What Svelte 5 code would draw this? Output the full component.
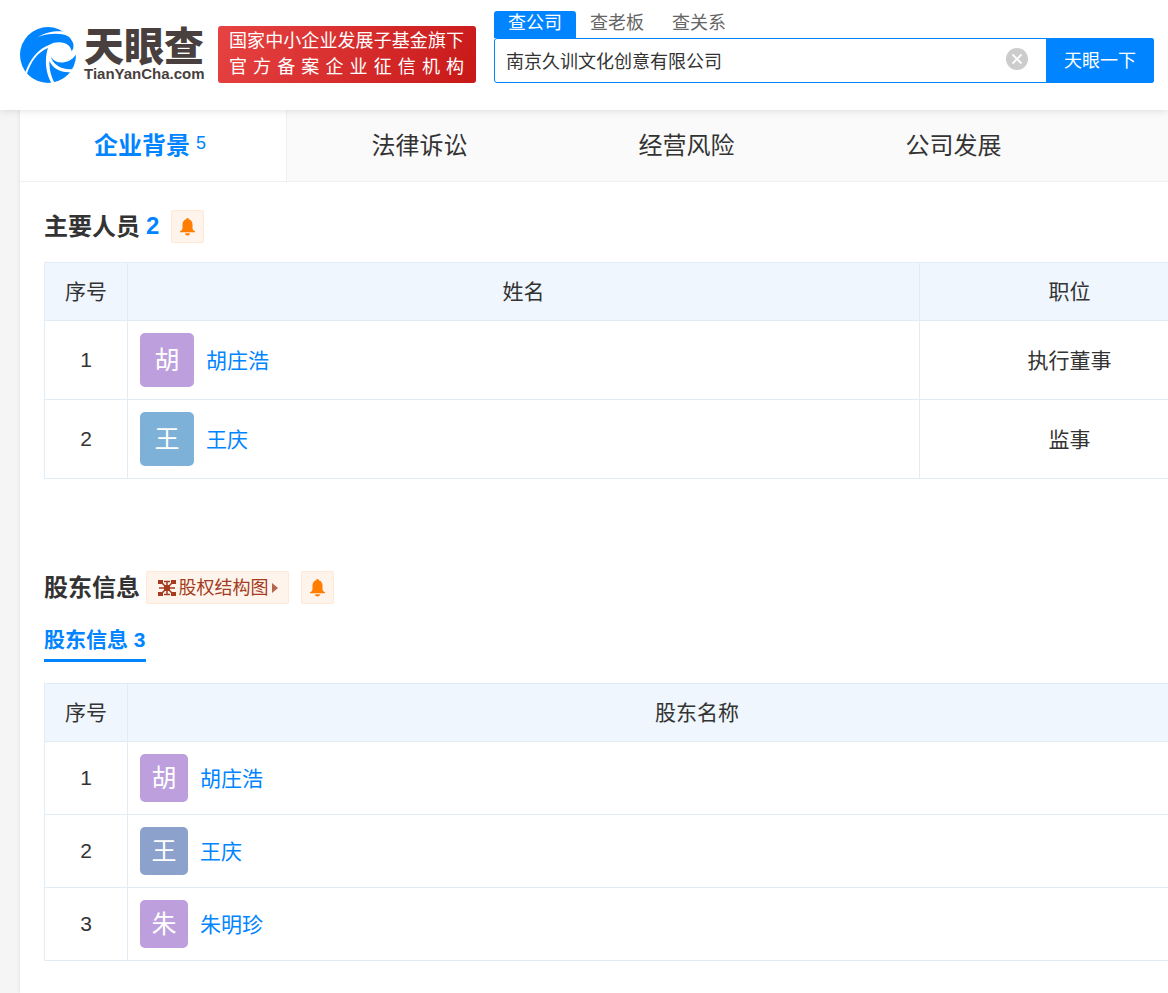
<script>
  let keyword = $state("南京久训文化创意有限公司");
  let searchType = $state("查公司");
  let activeTab = $state("企业背景");

  const searchTypes = ["查公司", "查老板", "查关系"];
  const tabs = [
    { name: "企业背景", count: 5 },
    { name: "法律诉讼" },
    { name: "经营风险" },
    { name: "公司发展" },
  ];
  const staff = [
    { name: "胡庄浩", color: "purple", position: "执行董事" },
    { name: "王庆", color: "blue", position: "监事" },
  ];
  const holders = [
    { name: "胡庄浩", color: "purple" },
    { name: "王庆", color: "indigo" },
    { name: "朱明珍", color: "purple" },
  ];
</script>

{#snippet bell()}
  <button class="bell" aria-label="监控">
    <svg width="17" height="18" viewBox="0 0 17 18" fill="#ff7d00">
      <path d="M8.500 0a1.300 1.300 0 0 1 1.300 1.300C12.300 2 13.500 4 13.500 6.500V10.500Q13.700 12.500 16 13.300V14.200H1V13.300Q3.300 12.500 3.500 10.500V6.500C3.500 4 4.700 2 7.200 1.300A1.300 1.300 0 0 1 8.500 0Z" />
      <path d="M6 15.200h5a2.500 2.200 0 0 1-5 0Z" />
    </svg>
  </button>
{/snippet}

{#snippet person(p)}
  <div class="person">
    <span class="avatar {p.color}">{p.name[0]}</span>
    <a href="#{p.name}">{p.name}</a>
  </div>
{/snippet}

<header>
  <a class="logo" href="#home">
    <svg width="56" height="56" viewBox="0 0 56 56">
      <circle cx="28" cy="28" r="28" fill="#0084ff" />
      <g fill="#fff">
        <path d="M18 10C25 5.500 35 3.500 44 4.500L47 6L56 14V21L53.500 20C54 14 51.500 11 48 9.200C40 5.500 28 6.500 18 10Z" />
        <path d="M5 46C10 32 18 22 29 18C36 14 44 15 48 18C50 19.500 51 21.500 51.500 24C53 22.500 53.600 21 53.500 19L58 20V24.500C54 32 48 35.500 41 35.500C36 35.500 32 32 30.500 29C33 38 42 43.500 54 42L52.500 45C42 46.500 33 42 29.500 34C29 42 31 49 34.500 56H31.500C26 47 24 33 28 21C18 25 11 34 6.500 48Z" />
      </g>
    </svg>
    <span class="wordmark">
      <strong>天眼查</strong>
      <span>TianYanCha.com</span>
    </span>
  </a>
  <div class="banner">
    <span>国家中小企业发展子基金旗下</span>
    <span>官方备案企业征信机构</span>
  </div>
  <form class="search" onsubmit={(e) => e.preventDefault()}>
    <div class="types">
      {#each searchTypes as type}
        <button type="button" class:active={searchType === type} onclick={() => (searchType = type)}>{type}</button>
      {/each}
    </div>
    <div class="box">
      <input type="text" aria-label="公司名称" bind:value={keyword} />
      <button type="button" class="clear" aria-label="清空" onclick={() => (keyword = "")}>
        <svg width="22" height="22" viewBox="0 0 22 22">
          <circle cx="11" cy="11" r="11" fill="#ccc" />
          <path d="M6.500 6.500l9 9M15.500 6.500l-9 9" stroke="#fff" stroke-width="1.800" />
        </svg>
      </button>
      <button class="submit">天眼一下</button>
    </div>
  </form>
</header>

<main>
  <nav>
    {#each tabs as tab}
      <button class:active={activeTab === tab.name} onclick={() => (activeTab = tab.name)}>
        {tab.name}{#if tab.count}<small>{tab.count}</small>{/if}
      </button>
    {/each}
  </nav>

  <section class="staff">
    <div class="title">
      <h2>主要人员</h2>
      <span class="count">2</span>
      {@render bell()}
    </div>
    <table>
      <thead>
        <tr><th class="index">序号</th><th>姓名</th><th class="position">职位</th></tr>
      </thead>
      <tbody>
        {#each staff as p, i}
          <tr>
            <td>{i + 1}</td>
            <td>{@render person(p)}</td>
            <td class="text">{p.position}</td>
          </tr>
        {/each}
      </tbody>
    </table>
  </section>

  <section class="holders">
    <div class="title">
      <h2>股东信息</h2>
      <button class="chart">
        <svg width="18" height="16" viewBox="0 0 18 16" fill="#a33c22">
          <path d="M0 0h5v4H0zM13 0h5v4h-5zM0 12h5v4H0zM13 12h5v4h-5zM6 5h6v6H6z" />
          <path d="M3 2l5 5M15 2l-5 5M3 14l5-5M15 14l-5-5M9 1v14M1 8h16M6 1.500h6M6 14.500h6" stroke="#a33c22" stroke-width="1.500" />
        </svg>
        <span>股权结构图</span>
        <svg width="6" height="10" viewBox="0 0 6 10" fill="#b5654f"><path d="M0 0l6 5-6 5z" /></svg>
      </button>
      {@render bell()}
    </div>
    <a class="subtab" href="#holders">股东信息 3</a>
    <table>
      <thead>
        <tr><th class="index">序号</th><th>股东名称</th></tr>
      </thead>
      <tbody>
        {#each holders as p, i}
          <tr>
            <td>{i + 1}</td>
            <td>{@render person(p)}</td>
          </tr>
        {/each}
      </tbody>
    </table>
  </section>
</main>

<style>
  :global(body) {
    background: #f5f5f5;
    color: #333;
    font-family: "Liberation Sans", "Noto Sans CJK SC", sans-serif;
    overflow-x: hidden;
  }
  button {
    padding: 0;
    border: none;
    background: none;
    color: inherit;
    font: inherit;
    cursor: pointer;
  }
  svg {
    display: block;
    flex: none;
  }
  a {
    color: #0084ff;
    text-decoration: none;
  }
  header {
    position: relative;
    box-sizing: border-box;
    display: flex;
    height: 110px;
    padding: 11px 14px 0 20px;
    background: #fff;
    box-shadow: 0 0 8px rgba(0, 0, 0, 0.15);
  }
  .logo {
    display: flex;
    gap: 8px;
    width: 186px;
    margin-top: 16px;
    color: #483f3e;
  }
  .wordmark {
    display: flex;
    flex-direction: column;
    white-space: nowrap;
    font-size: 15px;
    font-weight: bold;
    line-height: 14px;
  }
  .wordmark strong {
    font-size: 40px;
    line-height: 40px;
  }
  .banner {
    box-sizing: border-box;
    flex: none;
    width: 258px;
    height: 57px;
    margin: 15px 18px 0 12px;
    padding: 2px 12px 0 11px;
    border-radius: 3px;
    background: linear-gradient(120deg, #e74343, #c81818);
    color: #fff;
    font-size: 18px;
    line-height: 26px;
    white-space: nowrap;
  }
  .banner span {
    display: block;
    text-align: justify;
    text-align-last: justify;
  }
  .search {
    flex: 1;
    font-size: 18px;
  }
  .types {
    display: flex;
  }
  .types button {
    width: 82px;
    height: 27px;
    padding-bottom: 2px;
    border-radius: 3px 3px 0 0;
    color: #666;
    line-height: 25px;
  }
  .types .active {
    background: #0084ff;
    color: #fff;
  }
  .box {
    box-sizing: border-box;
    display: flex;
    align-items: center;
    height: 45px;
    border: 1px solid #0084ff;
    border-radius: 3px;
  }
  input {
    flex: 1;
    min-width: 0;
    padding: 0 11px 2px;
    border: none;
    outline: none;
    background: none;
    color: #333;
    font: inherit;
  }
  .clear {
    margin-right: 18px;
    padding-bottom: 4px;
  }
  .submit {
    width: 108px;
    height: 45px;
    margin-right: -1px;
    padding-bottom: 4px;
    border-radius: 0 3px 3px 0;
    background: #0084ff;
    color: #fff;
  }
  main {
    margin-left: 20px;
    padding-bottom: 32px;
    overflow: hidden;
    background: #fff;
    box-shadow: 0 0 4px rgba(0, 0, 0, 0.1);
  }
  nav {
    display: flex;
    height: 71px;
    border-bottom: 1px solid #f0f0f0;
    background: #fafafa;
    font-size: 24px;
  }
  nav button {
    box-sizing: border-box;
    display: flex;
    align-items: center;
    justify-content: center;
    width: 267px;
    padding: 0 2px 4px 0;
  }
  nav .active {
    padding-right: 6px;
    border-right: 1px solid #f0f0f0;
    background: #fff;
    color: #0084ff;
    font-weight: bold;
  }
  small {
    margin-left: 6px;
    font-size: 18px;
    font-weight: normal;
  }
  section {
    padding: 28px 0 0 24px;
  }
  .title {
    display: flex;
    align-items: center;
    height: 33px;
  }
  h2 {
    margin: 0;
    padding-bottom: 4px;
    font-size: 24px;
  }
  .count {
    margin-left: 6px;
    padding-bottom: 2px;
    color: #0084ff;
    font-size: 24px;
    font-weight: bold;
  }
  .bell,
  .chart {
    box-sizing: border-box;
    display: flex;
    align-items: center;
    justify-content: center;
    height: 33px;
    border: 1px solid #ffe8d5;
    border-radius: 2px;
    background: #fff4eb;
  }
  .bell {
    width: 33px;
    margin-left: 12px;
  }
  .chart {
    gap: 3px;
    width: 143px;
    margin-left: 6px;
    color: #a33c22;
    font-size: 18px;
  }
  .chart span {
    padding-bottom: 4px;
  }
  table {
    width: 100%;
    margin-top: 19px;
    border-collapse: collapse;
    table-layout: fixed;
    font-size: 21px;
    text-align: center;
  }
  .staff table {
    min-width: 1176px;
  }
  .holders table {
    min-width: 1223px;
    margin-top: 21px;
  }
  th,
  td {
    padding: 0;
    border: 1px solid #e1ecf5;
  }
  th {
    height: 53px;
    padding-bottom: 4px;
    background: #eff6fd;
    font-weight: normal;
  }
  .text {
    padding-bottom: 2px;
  }
  .index {
    width: 82px;
  }
  .position {
    width: 299px;
  }
  .person {
    display: flex;
    align-items: center;
    gap: 12px;
    padding: 12px;
  }
  .person a {
    padding-bottom: 2px;
  }
  .avatar {
    width: 54px;
    border-radius: 5px;
    color: #fff;
    font-size: 25px;
    line-height: 54px;
  }
  .holders .avatar {
    width: 48px;
    line-height: 48px;
  }
  .purple {
    background: #bc9fdc;
  }
  .blue {
    background: #7eb1d8;
  }
  .indigo {
    background: #8ca2cd;
  }
  .holders {
    padding-top: 92px;
  }
  .subtab {
    display: inline-block;
    margin-top: 16px;
    border-bottom: 3px solid #0084ff;
    font-size: 21px;
    font-weight: bold;
    line-height: 39px;
  }
</style>
